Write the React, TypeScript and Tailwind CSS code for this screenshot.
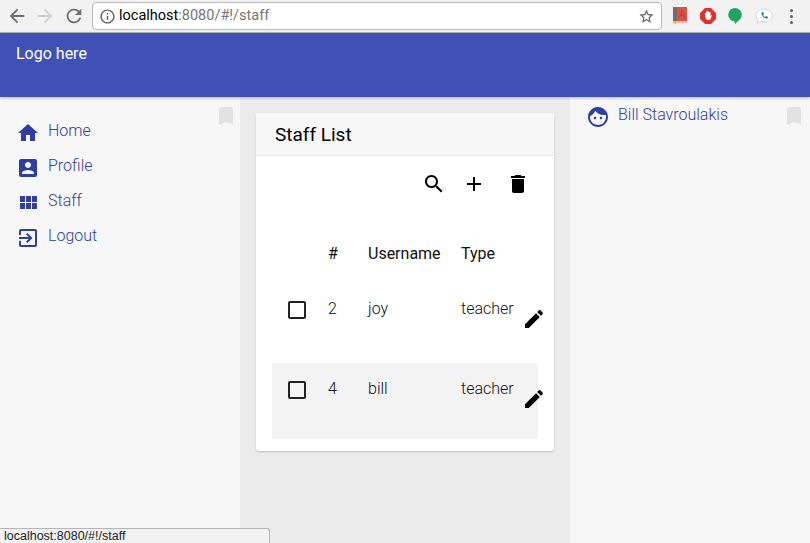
import React from 'react';

const paths = {
  back: 'M20 11H7.83l5.59-5.59L12 4l-8 8 8 8 1.41-1.41L7.83 13H20v-2z',
  forward: 'M12 4l-1.41 1.41L16.17 11H4v2h12.17l-5.58 5.59L12 20l8-8z',
  refresh:
    'M17.65 6.35C16.2 4.9 14.21 4 12 4c-4.42 0-7.99 3.58-7.99 8s3.57 8 7.99 8c3.73 0 6.84-2.55 7.73-6h-2.08c-.82 2.33-3.04 4-5.65 4-3.31 0-6-2.69-6-6s2.69-6 6-6c1.66 0 3.14.69 4.22 1.78L13 11h7V4l-2.35 2.35z',
  info: 'M11 17h2v-6h-2v6zm1-15C6.48 2 2 6.48 2 12s4.48 10 10 10 10-4.48 10-10S17.52 2 12 2zm0 18c-4.41 0-8-3.59-8-8s3.59-8 8-8 8 3.59 8 8-3.59 8-8 8zM11 9h2V7h-2v2z',
  star: 'M22 9.24l-7.19-.62L12 2 9.19 8.63 2 9.24l5.46 4.73L5.82 21 12 17.27 18.18 21l-1.63-7.03L22 9.24zM12 15.4l-3.76 2.27 1-4.28-3.32-2.88 4.38-.38L12 6.1l1.71 4.04 4.38.38-3.32 2.88 1 4.28L12 15.4z',
  home: 'M10 20v-6h4v6h5v-8h3L12 3 2 12h3v8z',
  profile:
    'M3 5v14c0 1.1.89 2 2 2h14c1.1 0 2-.9 2-2V5c0-1.1-.9-2-2-2H5c-1.11 0-2 .9-2 2zm12 4c0 1.66-1.34 3-3 3s-3-1.34-3-3 1.34-3 3-3 3 1.34 3 3zm-9 8c0-2 4-3.1 6-3.1s6 1.1 6 3.1v1H6v-1z',
  grid: 'M4 11h5V5H4v6zm0 7h5v-6H4v6zm6 0h5v-6h-5v6zm6 0h5v-6h-5v6zm-6-7h5V5h-5v6zm6-6v6h5V5h-5z',
  logout:
    'M10.09 15.59L11.5 17l5-5-5-5-1.41 1.41L12.67 11H3v2h9.67l-2.58 2.59zM19 3H5c-1.11 0-2 .9-2 2v4h2V5h14v14H5v-4H3v4c0 1.1.89 2 2 2h14c1.1 0 2-.9 2-2V5c0-1.1-.9-2-2-2z',
  face: 'M9 11.75c-.69 0-1.25.56-1.25 1.25s.56 1.25 1.25 1.25 1.25-.56 1.25-1.25-.56-1.25-1.25-1.25zm6 0c-.69 0-1.25.56-1.25 1.25s.56 1.25 1.25 1.25 1.25-.56 1.25-1.25-.56-1.25-1.25-1.25zM12 2C6.48 2 2 6.48 2 12s4.48 10 10 10 10-4.48 10-10S17.52 2 12 2zm0 18c-4.41 0-8-3.59-8-8 0-.29.02-.58.05-.86 2.36-1.05 4.23-2.98 5.21-5.37C11.07 8.33 14.05 10 17.42 10c.78 0 1.53-.09 2.25-.26.21.71.33 1.47.33 2.26 0 4.41-3.59 8-8 8z',
  bookmark: 'M17 3H7c-1.1 0-2 .9-2 2v16l7-3 7 3V5c0-1.1-.9-2-2-2z',
  search:
    'M15.5 14h-.79l-.28-.27C15.41 12.59 16 11.11 16 9.5 16 5.91 13.09 3 9.5 3S3 5.91 3 9.5 5.91 16 9.5 16c1.61 0 3.09-.59 4.23-1.57l.27.28v.79l5 4.99L20.49 19l-4.99-5zm-6 0C7.01 14 5 11.99 5 9.5S7.01 5 9.5 5 14 7.01 14 9.5 11.99 14 9.5 14z',
  add: 'M19 13h-6v6h-2v-6H5v-2h6V5h2v6h6v2z',
  trash: 'M6 19c0 1.1.9 2 2 2h8c1.1 0 2-.9 2-2V7H6v12zM19 4h-3.5l-1-1h-5l-1 1H5v2h14V4z',
  edit: 'M3 17.25V21h3.75L17.81 9.94l-3.75-3.75L3 17.25zM20.71 7.04c.39-.39.39-1.02 0-1.41l-2.34-2.34c-.39-.39-1.02-.39-1.41 0l-1.83 1.83 3.75 3.75 1.83-1.83z',
  checkbox:
    'M19 5v14H5V5h14m0-2H5c-1.1 0-2 .9-2 2v14c0 1.1.9 2 2 2h14c1.1 0 2-.9 2-2V5c0-1.1-.9-2-2-2z',
};

// Material icon drawn on the usual 24 unit grid
const Icon = ({ d, className = '' }: { d: string; className?: string }) => (
  <svg viewBox="0 0 24 24" className={`block shrink-0 fill-current ${className}`}>
    <path d={d} />
  </svg>
);

const navItems = [
  { label: 'Home', icon: paths.home },
  { label: 'Profile', icon: paths.profile },
  { label: 'Staff', icon: paths.grid },
  { label: 'Logout', icon: paths.logout },
];

const rows = [
  { id: 2, username: 'joy', type: 'teacher' },
  { id: 4, username: 'bill', type: 'teacher' },
];

const BrowserBar = () => (
  <div className="flex h-[33px] shrink-0 items-center border-b border-[#b5b5b5] bg-[#f2f2f2]">
    <Icon d={paths.back} className="ml-[6px] h-[22px] w-[22px] text-[#6e6e6e]" />
    <Icon d={paths.forward} className="ml-[6px] h-[22px] w-[22px] text-[#cfcfcf]" />
    <Icon d={paths.refresh} className="ml-[7px] h-[22px] w-[22px] text-[#6e6e6e]" />
    <div className="ml-[7px] flex h-[28px] w-[570px] items-center rounded-[4px] border border-[#b8b8b8] bg-white">
      <Icon d={paths.info} className="ml-[6px] h-[17px] w-[17px] text-[#5f5f5f]" />
      <span className="ml-[3px] text-[14.5px] text-black">
        localhost<span className="text-[#757575]">:8080/#!/staff</span>
      </span>
      <Icon d={paths.star} className="ml-auto mr-[6px] h-[17px] w-[17px] text-[#5f5f5f]" />
    </div>
    {/* extension icons */}
    <svg viewBox="0 0 16 18" className="ml-[10px] h-[18px] w-[16px] shrink-0">
      <rect x="1" y="0" width="14" height="16" fill="#d9534a" />
      <rect x="1" y="0" width="4" height="16" fill="#7a6a66" />
      <text x="10" y="11" fontSize="10" textAnchor="middle" fill="#b83d35">A</text>
      <rect x="1" y="14" width="14" height="2" fill="#eeb6ae" />
      <circle cx="3" cy="15.5" r="1.6" fill="#f2c230" />
    </svg>
    <svg viewBox="0 0 16 16" className="ml-[12px] h-[16px] w-[16px] shrink-0">
      <polygon points="5,0 11,0 16,5 16,11 11,16 5,16 0,11 0,5" fill="#e0332c" />
      <path d="M5 5h1V3.500h1V3h1v.500h1V4h1.500v4l1-1 .5.5-2 4.500H7L5 9z" fill="#fff" />
    </svg>
    <svg viewBox="0 0 14 16" className="ml-[12px] h-[16px] w-[14px] shrink-0">
      <circle cx="7" cy="6.800" r="6.800" fill="#20a464" />
      <polygon points="6,12 11,12 7,16" fill="#20a464" />
    </svg>
    <svg viewBox="0 0 18 16" className="ml-[13px] h-[16px] w-[18px] shrink-0">
      <path
        d="M9 1c4.500 0 8 2.800 8 6.500S13.500 14 9 14c-1 0-2-.1-3-.5L2 15l1.400-3C1.900 11 1 9.300 1 7.500 1 3.800 4.500 1 9 1z"
        fill="#fff"
        stroke="#c9d3e6"
      />
      <path
        d="M6.500 4.500l1.500-.5 1 2-1 1c.4 1 1.100 1.700 2 2l1-1 2 1-.5 1.500c-3 .6-6.500-2.800-6-6z"
        fill="#1a73d9"
      />
    </svg>
    <div className="ml-[17px] flex flex-col gap-[3px]">
      <span className="h-[3px] w-[3px] rounded-full bg-[#5f5f5f]" />
      <span className="h-[3px] w-[3px] rounded-full bg-[#5f5f5f]" />
      <span className="h-[3px] w-[3px] rounded-full bg-[#5f5f5f]" />
    </div>
  </div>
);

const Sidebar = () => (
  <aside className="relative w-[240px] shrink-0 bg-[#f7f7f7] pl-[16px] pt-[16px]">
    <Icon d={paths.bookmark} className="absolute left-[214px] top-[7px] h-[24px] w-[24px] text-[#e2e2e2]" />
    <nav className="flex flex-col">
      {navItems.map((item) => (
        <div key={item.label} className="flex h-[35px] text-[#303f9f]">
          <Icon d={item.icon} className="mt-[8px] h-[24px] w-[24px]" />
          <span className="ml-[8px] text-[16px] font-light leading-[35px]">{item.label}</span>
        </div>
      ))}
    </nav>
  </aside>
);

const StaffCard = () => (
  <section className="w-[298px] overflow-hidden rounded-[3px] bg-white shadow-[0_1px_2px_rgba(0,0,0,0.2)]">
    <h2 className="h-[43px] border-b border-[#e8e8e8] bg-[#f7f7f7] pl-[19px] text-[19px] font-normal leading-[43px] text-black">
      Staff List
    </h2>
    <div className="flex h-[56px] items-center pl-[166px] text-black">
      <Icon d={paths.search} className="h-[24px] w-[24px]" />
      <Icon d={paths.add} className="ml-[16px] h-[24px] w-[24px]" />
      <Icon d={paths.trash} className="ml-[20px] h-[24px] w-[24px]" />
    </div>
    <div className="px-[16px] pb-[12px]">
      <div className="flex h-[71px] items-center pt-[13px] text-[16px] text-[#111]">
        <span className="ml-[56px] w-[40px] shrink-0">#</span>
        <span className="w-[93px] shrink-0">Username</span>
        <span>Type</span>
      </div>
      {rows.map((row, index) => (
        <div
          key={row.id}
          className={`flex h-[76px] text-[16px] font-light text-[#111] ${index === 0 ? 'mb-[4px]' : 'bg-[#f3f3f3]'}`}
        >
          <Icon d={paths.checkbox} className="ml-[13px] mt-[15px] h-[24px] w-[24px] text-[#222]" />
          <span className="ml-[19px] mt-[14px] w-[40px] shrink-0 leading-[24px]">{row.id}</span>
          <span className="mt-[14px] w-[93px] shrink-0 leading-[24px]">{row.username}</span>
          <span className="mt-[14px] w-[61px] shrink-0 leading-[24px]">{row.type}</span>
          <Icon d={paths.edit} className="mt-[24px] h-[24px] w-[24px] text-black" />
        </div>
      ))}
    </div>
  </section>
);

export default function App() {
  return (
    <div className="relative flex h-[543px] w-[810px] flex-col overflow-hidden font-['Roboto',sans-serif]">
      <BrowserBar />
      <header className="z-10 h-[64px] shrink-0 bg-[#3f51b5] pl-[16px] pt-[10px] text-[16px] leading-[22px] text-white shadow-[0_1px_3px_rgba(0,0,0,0.25)]">
        Logo here
      </header>
      <div className="flex min-h-0 flex-1">
        <Sidebar />
        <main className="flex-1 bg-[#ebebeb] pl-[16px] pt-[16px]">
          <StaffCard />
        </main>
        <aside className="relative flex w-[240px] shrink-0 bg-[#f7f7f7] pl-[16px] pt-[6px] text-[#303f9f]">
          <Icon d={paths.face} className="mt-[2px] h-[24px] w-[24px]" />
          <span className="ml-[8px] text-[16px] font-light leading-[24px]">Bill Stavroulakis</span>
          <Icon d={paths.bookmark} className="absolute left-[212px] top-[7px] h-[24px] w-[24px] text-[#e2e2e2]" />
        </aside>
      </div>
      {/* browser status bubble */}
      <div className="absolute bottom-0 left-0 h-[15px] w-[270px] rounded-tr-[3px] border-r border-t border-[#b5b5b5] bg-[#f2f2f2] pl-[4px] font-['Liberation_Sans',sans-serif] text-[12.5px] leading-[14px] text-[#222]">
        localhost:8080/#!/staff
      </div>
    </div>
  );
}
